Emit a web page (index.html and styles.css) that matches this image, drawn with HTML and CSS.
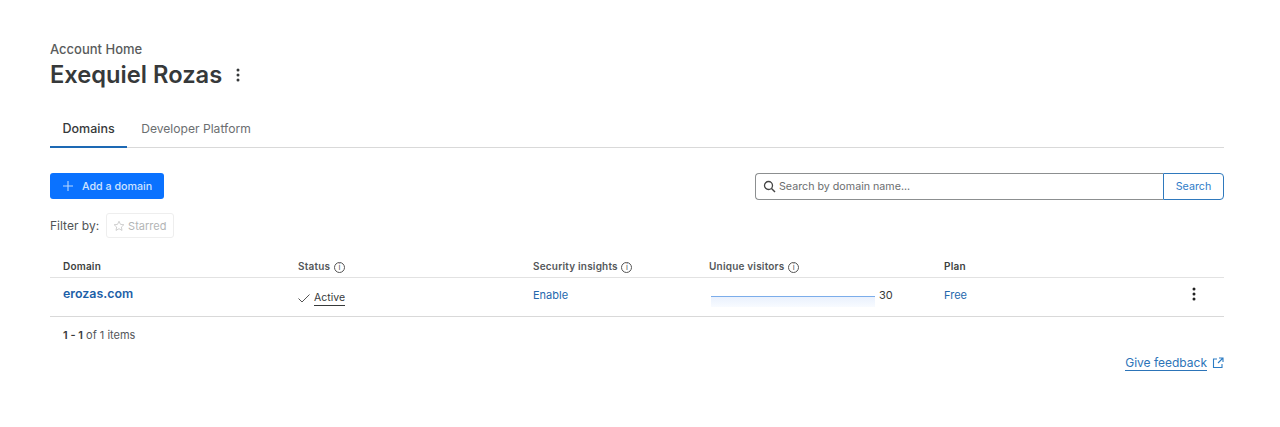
FILE: index.html
```html
<!DOCTYPE html>
<html lang="en">
<head>
    <meta charset="UTF-8">
    <title>Account Home</title>
    <link rel="stylesheet" href="styles.css">
</head>
<body>
    <div class="page">
        <div class="crumb">Account Home</div>
        <div class="title-row">
            <h1>Exequiel Rozas</h1>
            <svg class="kebab" width="4" height="14" viewBox="0 0 4 14"><circle cx="2" cy="2" r="1.5"/><circle cx="2" cy="7" r="1.5"/><circle cx="2" cy="12" r="1.5"/></svg>
        </div>

        <!-- Tabs -->
        <div class="tabs">
            <a class="tab active">Domains</a>
            <a class="tab">Developer Platform</a>
        </div>

        <!-- Toolbar -->
        <div class="toolbar">
            <button class="add-btn">
                <svg width="10" height="10" viewBox="0 0 10 10"><path d="M5 0v10M0 5h10" stroke="#b9d7ff" stroke-width="1.1" fill="none"/></svg>
                Add a domain
            </button>
            <div class="search">
                <div class="search-input">
                    <svg width="13" height="13" viewBox="0 0 13 13"><circle cx="5.5" cy="5.5" r="4" stroke="#444" stroke-width="1.3" fill="none"/><path d="M8.5 8.5l3.5 3.5" stroke="#444" stroke-width="1.4"/></svg>
                    <span>Search by domain name...</span>
                </div>
                <div class="search-btn">Search</div>
            </div>
        </div>

        <div class="filter">
            <span>Filter by:</span>
            <div class="chip">
                <svg width="12" height="12" viewBox="0 0 24 24"><path d="M12 2.5l2.9 6.2 6.8.8-5 4.6 1.3 6.7-6-3.4-6 3.4 1.3-6.7-5-4.6 6.8-.8z" stroke="#c4c4c4" stroke-width="1.6" fill="none"/></svg>
                Starred
            </div>
        </div>

        <!-- Domains table -->
        <div class="table-head">
            <div class="col-domain">Domain</div>
            <div class="col-status muted">Status <i class="info">i</i></div>
            <div class="col-security muted">Security insights <i class="info">i</i></div>
            <div class="col-visitors muted">Unique visitors <i class="info">i</i></div>
            <div class="col-plan">Plan</div>
        </div>
        <div class="table-row">
            <div class="col-domain"><a class="domain-link">erozas.com</a></div>
            <div class="col-status">
                <svg width="12" height="9" viewBox="0 0 12 9"><path d="M.5 4.5l3.5 3.5 7.5-7.5" stroke="#555" stroke-width="1" fill="none"/></svg>
                <span class="active-label">Active</span>
            </div>
            <div class="col-security"><a class="link">Enable</a></div>
            <div class="col-visitors visitors">
                <div class="spark"></div>
                <span>30</span>
            </div>
            <div class="col-plan"><a class="link">Free</a></div>
            <svg class="row-menu" width="4" height="14" viewBox="0 0 4 14"><circle cx="2" cy="2" r="1.5"/><circle cx="2" cy="7" r="1.5"/><circle cx="2" cy="12" r="1.5"/></svg>
        </div>

        <div class="pager"><b>1 - 1</b> of 1 items</div>

        <div class="feedback">
            <a>Give feedback</a>
            <svg width="12" height="12" viewBox="0 0 12 12"><path d="M5 2H1.5v8.5H10V7M7 1h4v4M11 1L6 6" stroke="#2c7cc4" stroke-width="1.1" fill="none"/></svg>
        </div>
    </div>
</body>
</html>
```

FILE: styles.css
```css
body {
    margin: 0;
    background: #fff;
    font-family: 'Inter', sans-serif;
    color: #36393a;
    overflow: hidden;
}

.page {
    padding: 41px 56px 0 50px;
}

.crumb {
    font-size: 13px;
    line-height: 16px;
    font-weight: 500;
    color: #595b5c;
}

.title-row {
    display: flex;
    align-items: center;
    gap: 14px;
    margin-top: 2px;
}

h1 {
    margin: 0;
    font-size: 23.7px;
    line-height: 32px;
    font-weight: 600;
    color: #36393a;
}

.kebab {
    fill: #36393a;
}

/* Tabs */
.tabs {
    display: flex;
    margin-top: 20px;
    border-bottom: 1px solid #d9d9d9;
}

.tab {
    margin: 0 0 -1px 1px;
    padding: 0 13px;
    font-size: 12.1px;
    line-height: 35px;
    color: #6b6e70;
}

.tab.active {
    margin-left: 0;
    padding: 0 12.5px;
    color: #36393a;
    font-size: 12.5px;
    font-weight: 500;
    border-bottom: 2px solid #1d69b4;
}

/* Toolbar */
.toolbar {
    display: flex;
    justify-content: space-between;
    margin-top: 25px;
}

.add-btn {
    display: flex;
    align-items: center;
    gap: 9px;
    height: 26px;
    width: 114px;
    padding: 0 0 0 13px;
    border: none;
    border-radius: 3px;
    background: #0a72ff;
    color: #cfe3ff;
    font-family: inherit;
    font-size: 10.7px;
    font-weight: 500;
    white-space: nowrap;
}

.search {
    display: flex;
    width: 469px;
    height: 27px;
    box-sizing: border-box;
    font-size: 10.7px;
}

.search-input {
    flex: 1;
    display: flex;
    align-items: center;
    gap: 3px;
    padding-left: 7px;
    border: 1px solid #8c8f90;
    border-right: none;
    border-radius: 4px 0 0 4px;
    color: #6b6e70;
}

.search-btn {
    width: 61px;
    box-sizing: border-box;
    border: 1px solid #2f79bd;
    border-radius: 0 4px 4px 0;
    color: #2f7cc8;
    text-align: center;
    line-height: 25px;
}

.filter {
    display: flex;
    align-items: center;
    gap: 7px;
    margin-top: 13px;
    font-size: 12px;
    color: #515456;
}

.chip {
    display: flex;
    align-items: center;
    gap: 3px;
    height: 25px;
    padding: 0 7px 0 6px;
    box-sizing: border-box;
    border: 1px solid #eee;
    border-radius: 3px;
    color: #b3b5b6;
    font-size: 11px;
}

/* Table */
.table-head, .table-row {
    display: flex;
    align-items: center;
    position: relative;
}

.table-head {
    height: 22px;
    margin-top: 17px;
    border-bottom: 1px solid #e2e2e2;
    font-size: 10px;
    font-weight: 600;
    letter-spacing: 0.2px;
    color: #3c3f40;
}

.table-row {
    height: 34px;
    padding-bottom: 4px;
    border-bottom: 1px solid #d9d9d9;
    font-size: 11px;
}

.muted {
    color: #54575a;
}

.col-domain { width: 235px; padding-left: 13px; }
.col-status { width: 235px; }
.col-security { width: 176px; }
.col-visitors { width: 235px; }

.table-row .col-domain {
    padding-bottom: 4px;
}

.table-row .col-status {
    display: flex;
    align-items: center;
    gap: 4px;
    padding-top: 6px;
    height: 20px;
    box-sizing: border-box;
}

.info {
    display: inline-block;
    width: 9px;
    height: 9px;
    margin-left: 1px;
    border: 1px solid #555;
    border-radius: 50%;
    font-size: 8px;
    line-height: 9px;
    font-style: normal;
    font-weight: 400;
    text-align: center;
    letter-spacing: 0;
}

.domain-link {
    font-size: 12.4px;
    font-weight: 600;
    color: #1d5fa8;
}

.active-label {
    color: #36393a;
    border-bottom: 1px solid #36393a;
    font-size: 10.5px;
    line-height: 15px;
}

.link {
    color: #2468ad;
}

.visitors {
    display: flex;
    align-items: center;
    gap: 4px;
    color: #36393a;
}

.spark {
    width: 164px;
    height: 11px;
    margin: 13px 0 0 2px;
    border-top: 1px solid #7cadea;
    background: linear-gradient(#eaf1fd, #f8fbff);
    box-sizing: border-box;
}

.row-menu {
    position: absolute;
    right: 28px;
    top: 9px;
    fill: #222;
}

.pager {
    margin: 10px 0 0 13px;
    font-size: 11px;
    line-height: 16px;
    color: #54575a;
}

.pager b {
    font-weight: 600;
    color: #36393a;
}

.feedback {
    display: flex;
    justify-content: flex-end;
    align-items: center;
    gap: 5px;
    margin-top: 12px;
    font-size: 12px;
    color: #2c74b8;
}

.feedback a {
    border-bottom: 1px solid #2c74b8;
    line-height: 15px;
}
```
